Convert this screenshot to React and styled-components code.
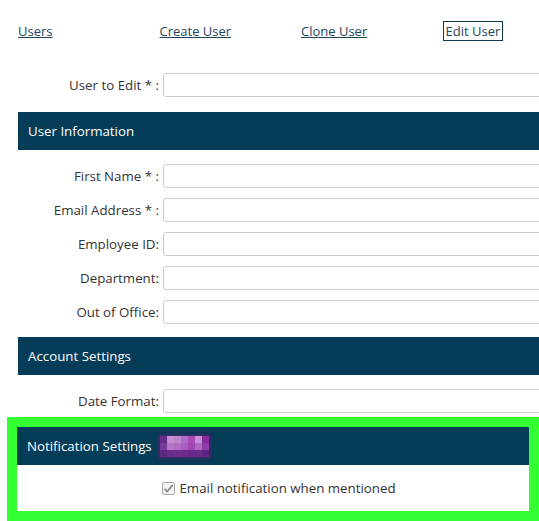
import styled, { createGlobalStyle } from "styled-components";

const GlobalStyle = createGlobalStyle`
    html, body {
        margin: 0;
        padding: 0;
        background: #ffffff;
        overflow: hidden;
    }
    body {
        font-family: "Open Sans", "Liberation Sans", sans-serif;
        font-size: 13px;
        color: #333333;
    }
`

const Page = styled.div`
    width: 100vw;
    overflow: hidden;
    padding-top: 21px;
`

const Nav = styled.nav`
    display: grid;
    grid-template-columns: repeat(4, 141.5px);
    padding-left: 18px;
    height: 20px;
    align-items: center;
`

const NavLink = styled.a`
    justify-self: start;
    color: #23465c;
    text-decoration: ${(props) => (props.active ? "none" : "underline")};
    border: ${(props) => (props.active ? "1px solid #0b3a52" : "1px solid transparent")};
    padding: 0 2px;
    margin-left: ${(props) => (props.active ? "0" : "-3px")};
    line-height: 18px;
    cursor: pointer;
`

const Section = styled.div`
    display: flex;
    flex-direction: column;
    gap: 10px;
    width: 560px;
    margin-left: 18px;
`

const Row = styled.div`
    display: grid;
    grid-template-columns: 145px 1fr;
    align-items: center;
`

const Label = styled.label`
    text-align: right;
    padding-right: 4px;
    font-size: 13.3px;
    white-space: nowrap;
`

const Input = styled.input`
    height: 24px;
    box-sizing: border-box;
    border: 1px solid #cccccc;
    border-radius: 3px;
    background: #ffffff;
    font: inherit;
`

const SectionHeader = styled.div`
    background: #053c57;
    color: #ffffff;
    height: 38px;
    display: flex;
    align-items: center;
    gap: 8px;
    padding-left: 10px;
    font-size: 13.3px;
    margin: ${(props) => props.margin || "0"};
`

const GreenFrame = styled.div`
    margin: 4px 0 0 7px;
    width: 512px;
    border: 10px solid #33ff33;
    background: #ffffff;
`

const Blur = styled.div`
    display: grid;
    grid-template-columns: repeat(7, 7px);
    grid-template-rows: repeat(3, 7px);
    background: #5a2580;
    box-shadow: 0 0 3px 2px #3a2a6a;
`

const Pixel = styled.div`
    background: ${(props) => props.color};
`

const CheckRow = styled.div`
    height: 46px;
    display: flex;
    align-items: center;
    justify-content: center;
    gap: 4px;
    padding-left: 12px;
    font-size: 13.3px;
`

const CheckBox = styled.span`
    width: 13px;
    height: 13px;
    box-sizing: border-box;
    border: 1px solid #a9a9a9;
    border-radius: 2px;
    background: #f4f4f4;
    display: inline-flex;
    align-items: center;
    justify-content: center;
`

const blurColors = [
    "#6a2a8e", "#c38fd0", "#b987ca", "#b06bc4", "#a64bb8", "#c98fd6", "#8a2aa0",
    "#7a3a9a", "#b577c8", "#ad6dc4", "#a85fc0", "#a047b4", "#b06bc0", "#8f3aa6",
    "#5e2880", "#6a2f8a", "#6e308e", "#6e2c8c", "#6a288a", "#672a86", "#5c2680",
];

const fields = ["First Name * :", "Email Address * :", "Employee ID:", "Department:", "Out of Office:"];

function App() {
    return (
        <>
            <GlobalStyle />
            <Page>
                <Nav>
                    <NavLink>Users</NavLink>
                    <NavLink>Create User</NavLink>
                    <NavLink>Clone User</NavLink>
                    <NavLink active>Edit User</NavLink>
                </Nav>
                <Section style={{ marginTop: "32px" }}>
                    <Row>
                        <Label>User to Edit * :</Label>
                        <Input type="text" />
                    </Row>
                </Section>
                <Section style={{ marginTop: "15px" }}>
                    <SectionHeader margin="0 0 4px 0">User Information</SectionHeader>
                    {fields.map((f) => (
                        <Row key={f}>
                            <Label>{f}</Label>
                            <Input type="text" />
                        </Row>
                    ))}
                    <SectionHeader margin="3px 0 4px 0">Account Settings</SectionHeader>
                    <Row>
                        <Label>Date Format:</Label>
                        <Input type="text" />
                    </Row>
                </Section>
                <GreenFrame>
                    <SectionHeader>
                        Notification Settings
                        <Blur>
                            {blurColors.map((c, i) => <Pixel key={i} color={c} />)}
                        </Blur>
                    </SectionHeader>
                    <CheckRow>
                        <CheckBox>
                            <svg width="11" height="11" viewBox="0 0 11 11">
                                <path d="M1.5 5.8 L4.2 8.5 L9.8 1.8" fill="none" stroke="#8a8a8a" strokeWidth="1.8" />
                            </svg>
                        </CheckBox>
                        Email notification when mentioned
                    </CheckRow>
                </GreenFrame>
            </Page>
        </>
    );
}

export default App;
